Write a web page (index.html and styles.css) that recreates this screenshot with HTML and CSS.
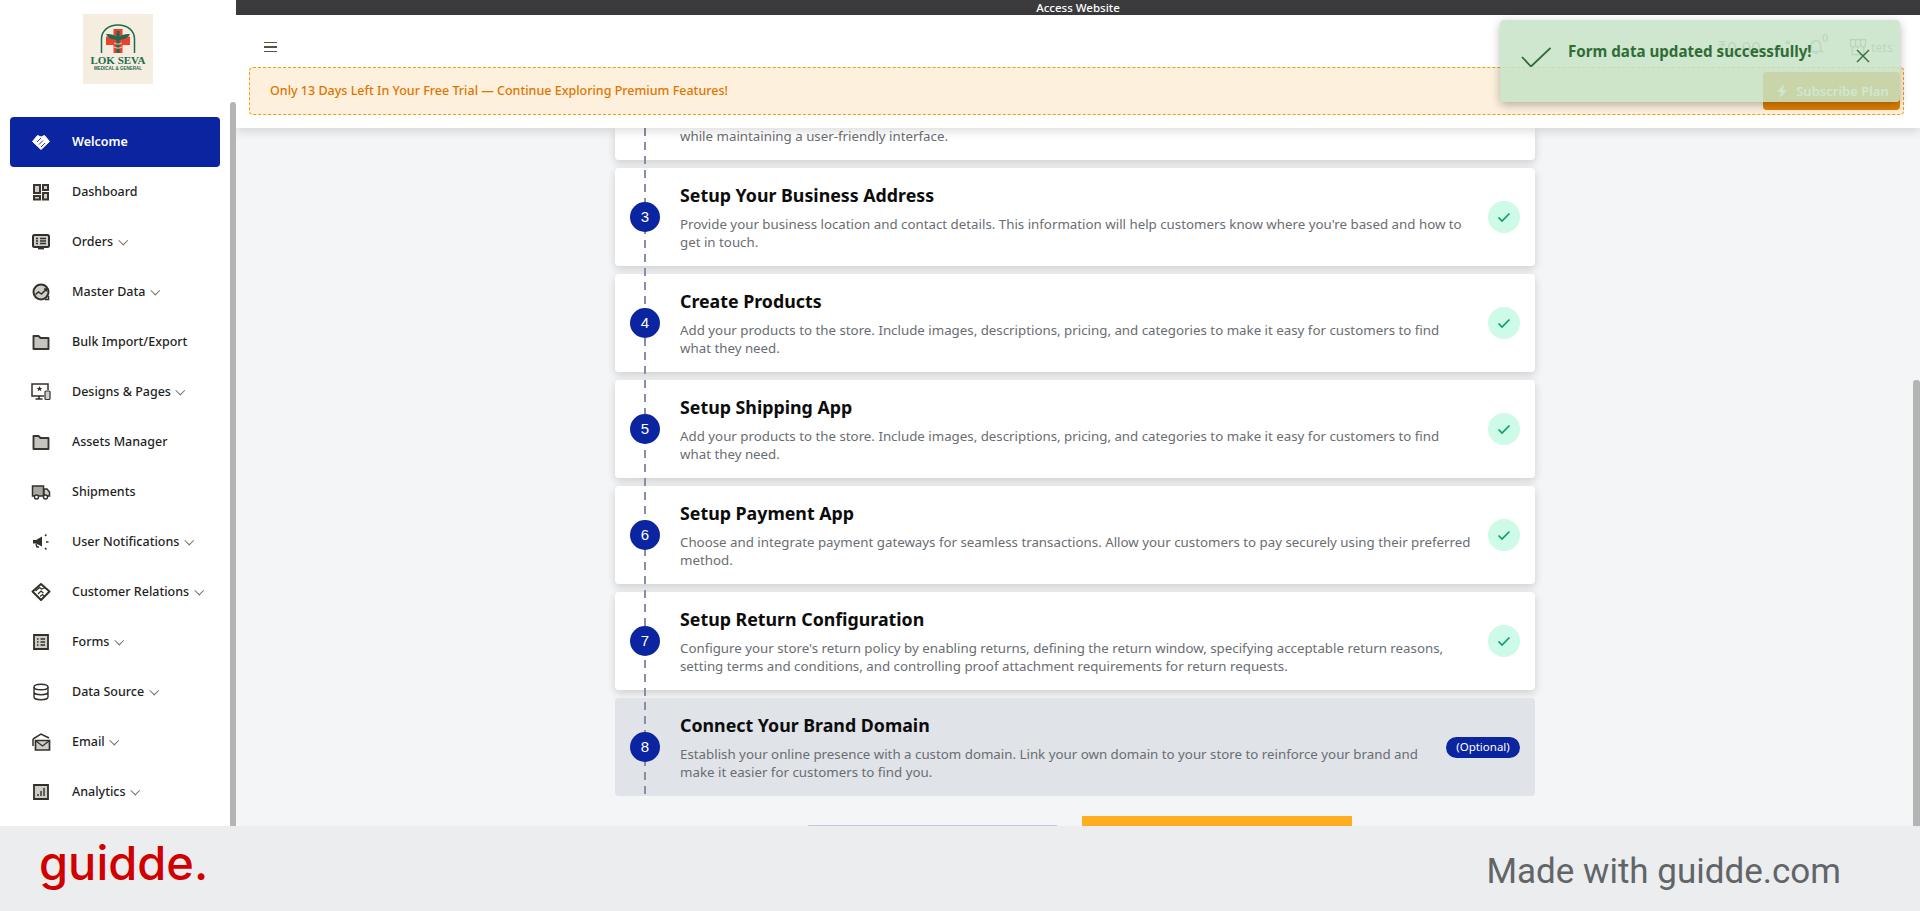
FILE: index.html
```html
<!DOCTYPE html>
<html lang="en">
<head>
<meta charset="utf-8">
<title>Welcome</title>
<link rel="stylesheet" href="styles.css">
</head>
<body>
<div class="app">
  <aside class="sidebar">
    <div class="logo-wrap">
      <div class="logo">
        <svg class="logo-mark" viewBox="0 0 36 30">
          <path d="M1.500 29V15C1.500 6.500 8.500 1 18 1s16.500 5.500 16.500 14v14" fill="none" stroke="#1d6b4f" stroke-width="1.500"/>
          <path d="M13.500 5h9v7.500H30v8.500h-7.500v8h-9v-8H6v-8.500h7.500z" fill="#e8432f"/>
          <path d="M6 10c4-.5 8 .5 10.500 3V7h3v6C22 10.500 26 9.500 30 10c-1.500 3.500-5 5.500-10.500 6v13h-3V16C11 15.500 7.500 13.500 6 10z" fill="#1d6b4f"/>
          <path d="M14 19c3 1.500 5 1.500 8 0M14 23c3 1.500 5 1.500 8 0" stroke="#f5eee0" stroke-width=".8" fill="none"/>
        </svg>
        <span class="logo-name">LOK SEVA</span>
        <span class="logo-sub">MEDICAL &amp; GENERAL</span>
      </div>
    </div>
    <nav class="nav">
      <a class="nav-item active"><svg class="ic" viewBox="0 0 20 20"><path d="M1.500 9.500L6.500 3.500 10 5l3.500-1.500 5 6L10 17.500z" fill="#fff" stroke="#fff" stroke-width="1" stroke-linejoin="round"/><path d="M6 10l4-4M8 12.500l4-4M10 15l4-4" stroke="#0b249f" stroke-width=".9" fill="none"/></svg><span>Welcome</span></a>
      <a class="nav-item"><svg class="ic" viewBox="0 0 20 20"><path d="M3 3h6v8H3zM12 3h5v5h-5zM3 14h6v3.500H3zM12 11h5v6.500h-5z" fill="#cfcdc8" stroke="#3a362f" stroke-width="2"/></svg><span>Dashboard</span></a>
      <a class="nav-item"><svg class="ic" viewBox="0 0 20 20"><rect x="2" y="3" width="16" height="12" rx="1.500" fill="#cfcdc8" stroke="#33302b" stroke-width="2"/><path d="M5 6.500h2M9 6.500h6M5 9h2M9 9h6M5 11.500h2M9 11.500h6" stroke="#33302b" stroke-width="1.300"/><path d="M7 16.500h6" stroke="#33302b" stroke-width="1.800"/></svg><span>Orders</span><i class="chev"></i></a>
      <a class="nav-item"><svg class="ic" viewBox="0 0 20 20"><circle cx="10" cy="10" r="7.500" fill="#cfcdc8" stroke="#33302b" stroke-width="2"/><path d="M4.500 12.500l3-2.500 3 2 4.500-4.500M13 7h2.500v2.500" fill="none" stroke="#33302b" stroke-width="1.500"/><path d="M14 17.500h3.500V14" fill="none" stroke="#33302b" stroke-width="1.500"/></svg><span>Master Data</span><i class="chev"></i></a>
      <a class="nav-item"><svg class="ic" viewBox="0 0 20 20"><path d="M2.500 4h5l2 2h8v11h-15z" fill="#c6c4bf" stroke="#3a362f" stroke-width="1.900" stroke-linejoin="round"/></svg><span>Bulk Import/Export</span></a>
      <a class="nav-item"><svg class="ic" viewBox="0 0 20 20"><path d="M13 14H1V2h16v6" fill="none" stroke="#33302b" stroke-width="1.500"/><path d="M4.500 17h7M8 14v3" stroke="#33302b" stroke-width="1.600"/><path d="M8.500 4l.9 2h2l-1.600 1.300.6 2-1.900-1.200-1.900 1.200.6-2L5.600 6h2z" fill="#33302b"/><rect x="14" y="9" width="5" height="8.500" rx="1" fill="#cfcdc8" stroke="#33302b" stroke-width="1.200"/></svg><span>Designs &amp; Pages</span><i class="chev"></i></a>
      <a class="nav-item"><svg class="ic" viewBox="0 0 20 20"><path d="M2.500 4h5l2 2h8v11h-15z" fill="#c6c4bf" stroke="#3a362f" stroke-width="1.900" stroke-linejoin="round"/></svg><span>Assets Manager</span></a>
      <a class="nav-item"><svg class="ic" viewBox="0 0 20 20"><path d="M1.500 4h11v10h-11z" fill="#a9a7a2" stroke="#33302b" stroke-width="1.500"/><path d="M13 7h3l2.500 3v4H13z" fill="#cfcdc8" stroke="#33302b" stroke-width="1.500"/><circle cx="5.500" cy="15" r="2" fill="#fff" stroke="#33302b" stroke-width="1.400"/><circle cx="14.500" cy="15" r="2" fill="#fff" stroke="#33302b" stroke-width="1.400"/></svg><span>Shipments</span></a>
      <a class="nav-item"><svg class="ic" viewBox="0 0 20 20"><path d="M2 8h3l6-3.500v10L5 11.500H2z" fill="#33302b"/><path d="M5 12l1 3h2" stroke="#33302b" stroke-width="1.400" fill="none"/><path d="M14 4l1.500-1.500M15 10h2.500M14 16l1.500 1.500" stroke="#33302b" stroke-width="1.500"/></svg><span>User Notifications</span><i class="chev"></i></a>
      <a class="nav-item"><svg class="ic" viewBox="0 0 20 20"><path d="M10 2l8.500 7.500L10 18 1.500 9.500z" fill="#fff" stroke="#33302b" stroke-width="2" stroke-linejoin="round"/><path d="M4.500 9l4-3.500 2 1.500 3-1M7 12l3-3 2.500 2M9 14.500l2.500-2 1.500 1.500" stroke="#33302b" stroke-width="1.300" fill="none"/></svg><span>Customer Relations</span><i class="chev"></i></a>
      <a class="nav-item"><svg class="ic" viewBox="0 0 20 20"><path d="M3 3h14v14H3z" fill="#cfcdc8" stroke="#33302b" stroke-width="1.800"/><path d="M6 7h1.500M9.500 7H14M6 10h1.500M9.500 10H14M6 13h1.500M9.500 13H14" stroke="#33302b" stroke-width="1.300"/></svg><span>Forms</span><i class="chev"></i></a>
      <a class="nav-item"><svg class="ic" viewBox="0 0 20 20"><ellipse cx="10" cy="5" rx="7" ry="2.800" fill="none" stroke="#33302b" stroke-width="1.400"/><path d="M3 5v10c0 1.500 3 2.800 7 2.800s7-1.300 7-2.800V5M3 10c0 1.500 3 2.800 7 2.800s7-1.300 7-2.800" fill="none" stroke="#33302b" stroke-width="1.400"/></svg><span>Data Source</span><i class="chev"></i></a>
      <a class="nav-item"><svg class="ic" viewBox="0 0 20 20"><path d="M2 7l8-5 8 4" fill="none" stroke="#33302b" stroke-width="1.500"/><path d="M2 7v7" stroke="#33302b" stroke-width="1.500"/><path d="M4.500 8.500h14V18h-14z" fill="#cfcdc8" stroke="#33302b" stroke-width="1.700"/><path d="M5 9l6.500 5 6.500-5" fill="none" stroke="#33302b" stroke-width="1.300"/></svg><span>Email</span><i class="chev"></i></a>
      <a class="nav-item"><svg class="ic" viewBox="0 0 20 20"><path d="M3 3h14v14H3z" fill="#cfcdc8" stroke="#33302b" stroke-width="1.800"/><path d="M7 14v-2M10 14V9M13 14V6" stroke="#33302b" stroke-width="1.400"/></svg><span>Analytics</span><i class="chev"></i></a>
    </nav>
    <div class="side-thumb"></div>
  </aside>

  <main class="main">
    <div class="access">Access Website</div>
    <header class="header">
      <div class="toolbar">
        <div class="burger"><b></b><b></b><b></b></div>
        <div class="tools">
          <span class="balance">₹0.00</span>
          <svg class="tool-ic" viewBox="0 0 20 20"><circle cx="5" cy="11" r="3" fill="#999"/><circle cx="14" cy="5" r="2.500" fill="#999"/><circle cx="14" cy="16" r="2.500" fill="#999"/></svg>
          <span class="bell"><svg class="tool-ic" viewBox="0 0 20 20"><path d="M10 3c-3 0-5 2-5 5v4l-2 3h14l-2-3V8c0-3-2-5-5-5zM8 17h4" fill="none" stroke="#888" stroke-width="1.500"/></svg><em>0</em></span>
          <svg class="tool-ic store" viewBox="0 0 24 24"><path d="M3 3h18v6a3 3 0 0 1-6 0 3 3 0 0 1-6 0 3 3 0 0 1-6 0zM5 12v9h14v-9M9 3v6M15 3v6" fill="none" stroke="#777" stroke-width="1.500"/></svg>
          <span class="user">tets</span>
        </div>
      </div>
      <div class="trial">
        <span>Only 13 Days Left In Your Free Trial — Continue Exploring Premium Features!</span>
        <button class="subscribe"><svg viewBox="0 0 16 16" width="16" height="16"><path d="M10 1L3 9h4l-1 6 7-8H9z" fill="#fff"/></svg>Subscribe Plan</button>
      </div>
    </header>

    <section class="content">
      <div class="steps">
        <article class="step partial">
          <p>while maintaining a user-friendly interface.</p>
        </article>
        <article class="step">
          <div class="num">3</div>
          <div class="body"><h3>Setup Your Business Address</h3><p>Provide your business location and contact details. This information will help customers know where you're based and how to<br>get in touch.</p></div>
          <div class="tick"><svg viewBox="0 0 16 16" width="16" height="16"><path d="M2.500 8.500l3.500 3.500 7.500-7.500" fill="none" stroke="#0f9d6b" stroke-width="1.700"/></svg></div>
        </article>
        <article class="step">
          <div class="num">4</div>
          <div class="body"><h3>Create Products</h3><p>Add your products to the store. Include images, descriptions, pricing, and categories to make it easy for customers to find<br>what they need.</p></div>
          <div class="tick"><svg viewBox="0 0 16 16" width="16" height="16"><path d="M2.500 8.500l3.500 3.500 7.500-7.500" fill="none" stroke="#0f9d6b" stroke-width="1.700"/></svg></div>
        </article>
        <article class="step">
          <div class="num">5</div>
          <div class="body"><h3>Setup Shipping App</h3><p>Add your products to the store. Include images, descriptions, pricing, and categories to make it easy for customers to find<br>what they need.</p></div>
          <div class="tick"><svg viewBox="0 0 16 16" width="16" height="16"><path d="M2.500 8.500l3.500 3.500 7.500-7.500" fill="none" stroke="#0f9d6b" stroke-width="1.700"/></svg></div>
        </article>
        <article class="step">
          <div class="num">6</div>
          <div class="body"><h3>Setup Payment App</h3><p>Choose and integrate payment gateways for seamless transactions. Allow your customers to pay securely using their preferred<br>method.</p></div>
          <div class="tick"><svg viewBox="0 0 16 16" width="16" height="16"><path d="M2.500 8.500l3.500 3.500 7.500-7.500" fill="none" stroke="#0f9d6b" stroke-width="1.700"/></svg></div>
        </article>
        <article class="step">
          <div class="num">7</div>
          <div class="body"><h3>Setup Return Configuration</h3><p>Configure your store's return policy by enabling returns, defining the return window, specifying acceptable return reasons,<br>setting terms and conditions, and controlling proof attachment requirements for return requests.</p></div>
          <div class="tick"><svg viewBox="0 0 16 16" width="16" height="16"><path d="M2.500 8.500l3.500 3.500 7.500-7.500" fill="none" stroke="#0f9d6b" stroke-width="1.700"/></svg></div>
        </article>
        <article class="step current">
          <div class="num">8</div>
          <div class="body"><h3>Connect Your Brand Domain</h3><p>Establish your online presence with a custom domain. Link your own domain to your store to reinforce your brand and<br>make it easier for customers to find you.</p></div>
          <span class="optional">(Optional)</span>
        </article>
      </div>
      <div class="actions">
        <div class="btn-light"></div>
        <div class="btn-orange"></div>
      </div>
    </section>
    <div class="main-thumb"></div>

    <div class="toast">
      <svg class="toast-check" viewBox="0 0 30 20" width="30" height="20"><path d="M1 10l9 9.500L29.500 1" fill="none" stroke="#2f6d36" stroke-width="1.800"/></svg>
      <span class="toast-text">Form data updated successfully!</span>
      <svg class="toast-close" viewBox="0 0 14 14" width="14" height="14"><path d="M1 1l12 12M13 1L1 13" fill="none" stroke="#2f6d36" stroke-width="1.400"/></svg>
    </div>
  </main>
</div>
<footer class="footer">
  <span class="brand">guidde.</span>
  <span class="made">Made with guidde.com</span>
</footer>
</body>
</html>
```

FILE: styles.css
```css
* { box-sizing: border-box; }
html, body { margin: 0; height: 100%; }
body {
  width: 1920px; height: 911px; overflow: hidden;
  display: flex; flex-direction: column;
  font-family: "Noto Sans", "Open Sans", sans-serif;
  background: #f4f5f7;
}
.app { flex: 0 0 826px; height: 826px; display: flex; min-height: 0; }

/* sidebar */
.sidebar { position: relative; flex: 0 0 236px; background: #fff; display: flex; flex-direction: column; overflow: hidden; }
.logo-wrap { height: 117px; padding: 14px 0 0 83px; }
.logo { width: 70px; height: 70px; background: #f5eee0; display: flex; flex-direction: column; align-items: center; padding-top: 10px; color: #1d6b4f; }
.logo-mark { display: block; width: 36px; height: 30px; }
.logo-name { font-family: "Liberation Serif", serif; font-size: 11px; line-height: 11px; font-weight: 700; margin-top: 1px; white-space: nowrap; }
.logo-sub { font-family: "Liberation Sans", sans-serif; font-size: 4.500px; line-height: 6px; font-weight: 700; white-space: nowrap; }
.nav { display: flex; flex-direction: column; padding: 0 16px 0 10px; }
.nav-item { height: 50px; display: flex; align-items: center; padding: 0 0 2px 21px; color: #1f1f1f; font-size: 12.500px; font-weight: 500; white-space: nowrap; }
.nav-item.active { background: #0b249f; color: #fff; border-radius: 4px; font-weight: 600; }
.ic { width: 20px; height: 20px; margin-right: 21px; flex: none; position: relative; top: 1px; }
.chev { width: 6.500px; height: 6.500px; border-right: 1.800px solid #746b5a; border-bottom: 1.800px solid #746b5a; transform: rotate(45deg); margin: -2px 0 0 6.500px; }
.side-thumb { position: absolute; right: 0; top: 102px; bottom: 0; width: 6px; background: #b4b4b4; border-radius: 3px 3px 0 0; }

/* main */
.main { position: relative; flex: 1; min-width: 0; display: flex; flex-direction: column; overflow: hidden; }
.access { flex: 0 0 15px; height: 15px; background: #3b3b3d; color: #fff; font-size: 11.500px; font-weight: 500; line-height: 15px; text-align: center; }
.header { position: relative; z-index: 3; flex: 0 0 113px; background: #fff; padding: 0 16px 0 13px; box-shadow: 0 3px 10px rgba(0,0,0,.14); }
.toolbar { height: 52px; display: flex; align-items: center; justify-content: space-between; padding: 12px 11px 0 15px; }
.burger { width: 13px; display: flex; flex-direction: column; gap: 2.900px; }
.burger b { display: block; height: 1.300px; background: #5a5448; }
.tools { display: flex; align-items: center; gap: 14px; color: #777; }
.balance { font-size: 17px; color: #888; }
.tool-ic { width: 18px; height: 18px; display: block; }
.store { width: 20px; height: 20px; margin-left: 9px; margin-right: -11px; }
.bell { position: relative; display: block; }
.bell em { position: absolute; left: 15px; top: -8px; font-style: normal; font-size: 11px; font-weight: 600; color: #888; }
.user { font-size: 12.500px; color: #888; }
.trial {
  height: 48px; display: flex; align-items: center; justify-content: space-between;
  background: #fdf0dd; border: 1px dashed #f39c12; border-radius: 4px;
  padding: 0 3px 2px 20px; color: #df7500; font-size: 12.500px; font-weight: 500;
}
.subscribe {
  height: 38px; width: 137px; border: 0; border-radius: 4px; background: #df8000; color: #fff;
  font: 600 13px "Noto Sans", sans-serif; display: flex; align-items: center; justify-content: center; gap: 6px; padding: 0;
  margin-top: 2px;
}

.content { flex: 1; min-height: 0; overflow: hidden; }
.steps { position: relative; width: 920px; margin: 0 0 0 379px; display: flex; flex-direction: column; gap: 8px; }
.steps::before { content: ""; position: absolute; z-index: 1; left: 29px; top: 0; bottom: 0; width: 2px; background: repeating-linear-gradient(#8a8da8 0 8px, transparent 8px 14px); }
.step { position: relative; height: 98px; display: flex; align-items: center; padding: 0 15px; background: #fff; border-radius: 4px; box-shadow: 0 3px 8px rgba(0,0,0,.16); }
.step.partial { height: 32px; align-items: flex-start; padding-left: 65px; border-radius: 0 0 4px 4px; }
.step.partial p { margin: -1px 0 0; font-size: 13.300px; line-height: 18px; color: #6a6d72; white-space: nowrap; }
.step.current { background: #e0e3e8; box-shadow: none; }
.num { position: relative; z-index: 2; flex: none; width: 30px; height: 30px; margin-right: 20px; border-radius: 50%; background: #0b249f; color: #fff; font-size: 15px; line-height: 30px; text-align: center; font-family: "Liberation Sans", sans-serif; }
.body { flex: 1; min-width: 0; }
.body h3 { margin: -1px 0 7px; font-size: 17.800px; line-height: 26px; font-weight: 700; color: #0c0c0c; white-space: nowrap; }
.body p { margin: 0; font-size: 13.300px; line-height: 18px; color: #6a6d72; white-space: nowrap; }
.tick { flex: none; width: 32px; height: 32px; border-radius: 50%; background: #cdfbe7; display: flex; align-items: center; justify-content: center; }
.optional { flex: none; height: 21px; line-height: 20px; width: 74px; text-align: center; background: #0b249f; color: #fff; font-size: 11.500px; border-radius: 11px; }
.actions { display: flex; gap: 23px; margin: 20px 0 0 570px; }
.btn-light { width: 253px; height: 48px; margin-top: 9px; border: 2px solid #c5c4e4; border-radius: 4px; }
.btn-orange { width: 270px; height: 48px; background: #ffae22; }
.main-thumb { position: absolute; z-index: 2; right: 0; top: 380px; bottom: 0; width: 7px; background: #b4b4b4; border-radius: 3px 3px 0 0; }

/* toast */
.toast {
  position: absolute; z-index: 5; left: 1264px; top: 20px; width: 400px; height: 82px;
  display: flex; align-items: flex-start; background: rgba(199,227,199,.85); border-radius: 4px;
  box-shadow: 0 3px 10px rgba(0,0,0,.28); padding: 0 30px 0 21px;
}
.toast-check { margin: 27px 0 0 0; flex: none; }
.toast-text { margin: 20px 0 0 17px; font-size: 15.150px; line-height: 22px; font-weight: 700; color: #2f6d36; white-space: nowrap; flex: 1; }
.toast-close { margin: 29px 0 0 0; flex: none; }

/* footer */
.footer { flex: 0 0 85px; height: 85px; background: #ecedef; display: flex; align-items: center; justify-content: space-between; padding: 0 79px 0 39px; position: relative; z-index: 6; }
.brand { font-family: Inter, "Noto Sans", sans-serif; font-size: 47px; line-height: 60px; color: #d00000; font-weight: 500; margin-bottom: 11px; }
.made { font-family: Roboto, sans-serif; font-size: 35px; color: #626568; margin-top: 6px; }
```
